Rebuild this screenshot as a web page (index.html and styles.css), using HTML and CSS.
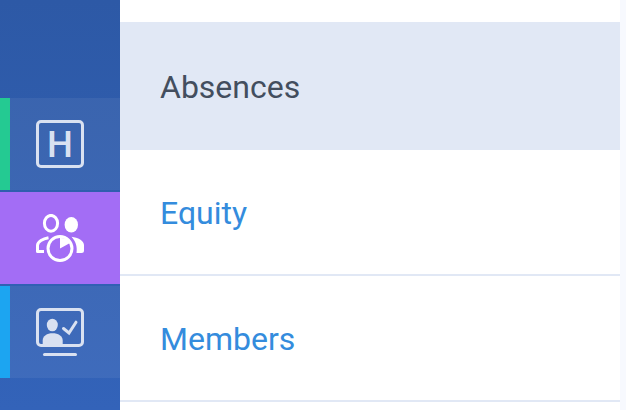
FILE: index.html
```html
<!DOCTYPE html>
<html lang="en">

<head>
	<meta charset="utf-8">
	<meta name="viewport" content="width=device-width">
	<title>Absences</title>
	<link rel="stylesheet" href="styles.css">
</head>

<body>
	<nav class="sidebar">
		<a class="tab home">
			<svg width="48" height="48" viewBox="0 0 48 48">
				<rect x="1.5" y="1.5" width="45" height="45" rx="3.5" fill="none" stroke="currentColor" stroke-width="3" />
				<text class="letter" x="24" y="37" text-anchor="middle">H</text>
			</svg>
		</a>
		<a class="tab people active">
			<svg width="48" height="48" viewBox="0 0 48 48">
				<ellipse cx="15" cy="9.3" rx="6.6" ry="7.9" fill="none" stroke="currentColor" stroke-width="3" />
				<ellipse cx="35.3" cy="10.7" rx="6.7" ry="7.7" fill="currentColor" />
				<path d="M12.5 23.7C7 24.6 1.5 27.5 1.5 31.5v6H8" fill="none" stroke="currentColor" stroke-width="3" stroke-linejoin="round" />
				<path d="M35.5 22.7C42 23.500 48 26.500 48 31v5.500q0 2.500-2.500 2.500H40.500C41.500 32 39.500 27 35.500 22.700z" fill="currentColor" />
				<circle cx="24" cy="34.5" r="12" fill="none" stroke="currentColor" stroke-width="3" />
				<path d="M24 34.500V24a11 11 0 0 1 10 5z" fill="currentColor" />
			</svg>
		</a>
		<a class="tab members">
			<svg width="48" height="48" viewBox="0 0 48 48">
				<rect x="1.5" y="1.5" width="45" height="36" rx="3.5" fill="none" stroke="currentColor" stroke-width="3" />
				<ellipse cx="16.3" cy="17" rx="5.5" ry="6.3" fill="currentColor" />
				<path d="M6.700 37v-4.500C6.700 28 11 25.300 16.600 25.300S26.700 28 26.700 32.500V37z" fill="currentColor" />
				<path d="M27.500 20.500l5.500 4.500 7-10.800" fill="none" stroke="currentColor" stroke-width="3" stroke-linecap="round" />
				<path d="M8.500 46.500h31" stroke="currentColor" stroke-width="3" stroke-linecap="round" />
			</svg>
		</a>
	</nav>
	<main class="panel">
		<ul class="menu">
			<li class="selected">Absences</li>
			<li>Equity</li>
			<li>Members</li>
		</ul>
	</main>
</body>

</html>
```
FILE: styles.css
```css
html, body {
	height: 100%;
	margin: 0;
}

body {
	display: flex;
	overflow: hidden;
	background: #f7f9fe;
	font-family: Roboto, "Liberation Sans", sans-serif;
}

.sidebar {
	box-sizing: border-box;
	width: 120px;
	height: 100%;
	padding-top: 98px;
	display: flex;
	flex-direction: column;
	gap: 2px;
	background: linear-gradient(180deg, #2d59a6, #3363b9);
}

.tab {
	box-sizing: border-box;
	height: 92px;
	display: flex;
	align-items: center;
	justify-content: center;
	padding-right: 10px;
	border-left: 10px solid;
	background: rgba(255, 255, 255, 0.06);
}

.tab svg {
	color: #d9e1f1;
}

.home {
	border-color: #24ca92;
}

.members {
	border-color: #1ca5f1;
}

.people.active {
	border-color: #a36df5;
	background: #a36df5;
}

.active svg {
	color: #fff;
}

.letter {
	font-size: 36.5px;
	font-weight: 500;
	fill: currentColor;
}

.panel {
	width: 500px;
	height: 100%;
	background: #fff;
}

.menu {
	margin: 0;
	padding: 22px 0 0;
	list-style: none;
}

.menu li {
	box-sizing: border-box;
	height: 126px;
	padding: 0 40px;
	border-bottom: 2px solid #e1e8f5;
	color: #348cdd;
	font-size: 32px;
	line-height: 126px;
}

.menu .selected {
	height: 128px;
	background: #e1e8f5;
	color: #434e5e;
	line-height: 130px;
}
```
